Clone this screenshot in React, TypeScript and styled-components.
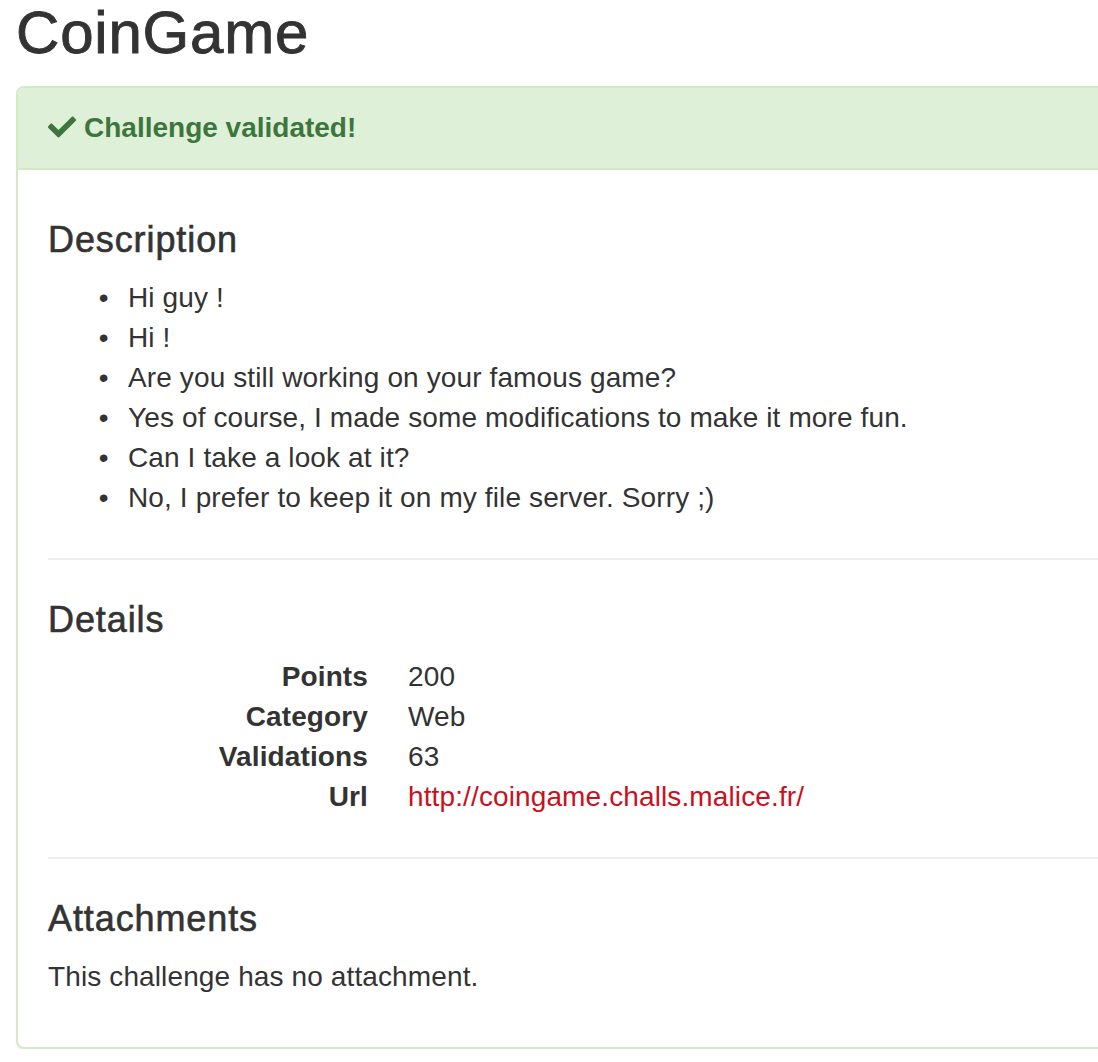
import styled, { createGlobalStyle } from "styled-components";
import { FaCheck } from "react-icons/fa";

const GlobalStyle = createGlobalStyle`
    html, body {
        margin: 0;
        padding: 0;
        background: #fff;
        overflow: hidden;
    }
    body {
        font-family: "Liberation Sans", Arial, Helvetica, sans-serif;
        font-size: 28px;
        line-height: 40px;
        color: #333;
        letter-spacing: 0.12px;
    }
`;

const Page = styled.div`
    width: 1200px;
    padding: 0 0 0 16px;
`;

const Title = styled.h2`
    margin: 0 0 20px;
    font-size: 60px;
    line-height: 66px;
    font-weight: 500;
    color: #333;
    letter-spacing: 0.8px;
    -webkit-text-stroke: 0.9px #333;
`;

const Panel = styled.section`
    border: 2px solid #d6e9c6;
    border-radius: 8px;
    background: #fff;
    box-shadow: 0 2px 2px rgba(0, 0, 0, 0.05);
    overflow: hidden;
`;

const PanelHeading = styled.header`
    display: flex;
    align-items: center;
    gap: 8px;
    padding: 20px 30px;
    background: #dff0d8;
    border-bottom: 2px solid #d6e9c6;
    color: #3c763d;
    font-weight: bold;
    letter-spacing: 0;
    svg {
        width: 28px;
        height: 28px;
        margin-top: -2px;
    }
`;

const PanelBody = styled.div`
    padding: 30px;
`;

const SectionTitle = styled.h4`
    margin: 20px 0 18px;
    font-size: 36px;
    line-height: 39.6px;
    font-weight: 500;
    letter-spacing: 0.9px;
    -webkit-text-stroke: 0.6px #333;
`;

const List = styled.ul`
    margin: 0 0 20px;
    padding-left: 80px;
    & > li {
        line-height: 40px;
    }
    & > li::marker {
        content: "\\2022\\00a0\\2009\\2009";
    }
`;

const Divider = styled.hr`
    margin: 40px 0;
    border: 0;
    border-top: 2px solid #eee;
`;

const DetailList = styled.dl`
    display: grid;
    grid-template-columns: 320px 1fr;
    column-gap: 40px;
    margin: 0 0 20px;
    dt {
        font-weight: bold;
        text-align: right;
        white-space: nowrap;
    }
    dd {
        margin: 0;
    }
`;

const Link = styled.a`
    color: #c9111e;
    text-decoration: none;
`;

const Text = styled.p`
    margin: 0 0 20px;
`;

const description = [
    "Hi guy !",
    "Hi !",
    "Are you still working on your famous game?",
    "Yes of course, I made some modifications to make it more fun.",
    "Can I take a look at it?",
    "No, I prefer to keep it on my file server. Sorry ;)",
];

const App = () => {
    return (
        <Page>
            <GlobalStyle />
            <Title>CoinGame</Title>
            <Panel>
                <PanelHeading>
                    <FaCheck />
                    <span>Challenge validated!</span>
                </PanelHeading>
                <PanelBody>
                    <SectionTitle>Description</SectionTitle>
                    <List>
                        {description.map((line) => (
                            <li key={line}>{line}</li>
                        ))}
                    </List>
                    <Divider />
                    <SectionTitle>Details</SectionTitle>
                    <DetailList>
                        <dt>Points</dt>
                        <dd>200</dd>
                        <dt>Category</dt>
                        <dd>Web</dd>
                        <dt>Validations</dt>
                        <dd>63</dd>
                        <dt>Url</dt>
                        <dd><Link href="#">http://coingame.challs.malice.fr/</Link></dd>
                    </DetailList>
                    <Divider />
                    <SectionTitle>Attachments</SectionTitle>
                    <Text>This challenge has no attachment.</Text>
                </PanelBody>
            </Panel>
        </Page>
    );
};

export default App;
